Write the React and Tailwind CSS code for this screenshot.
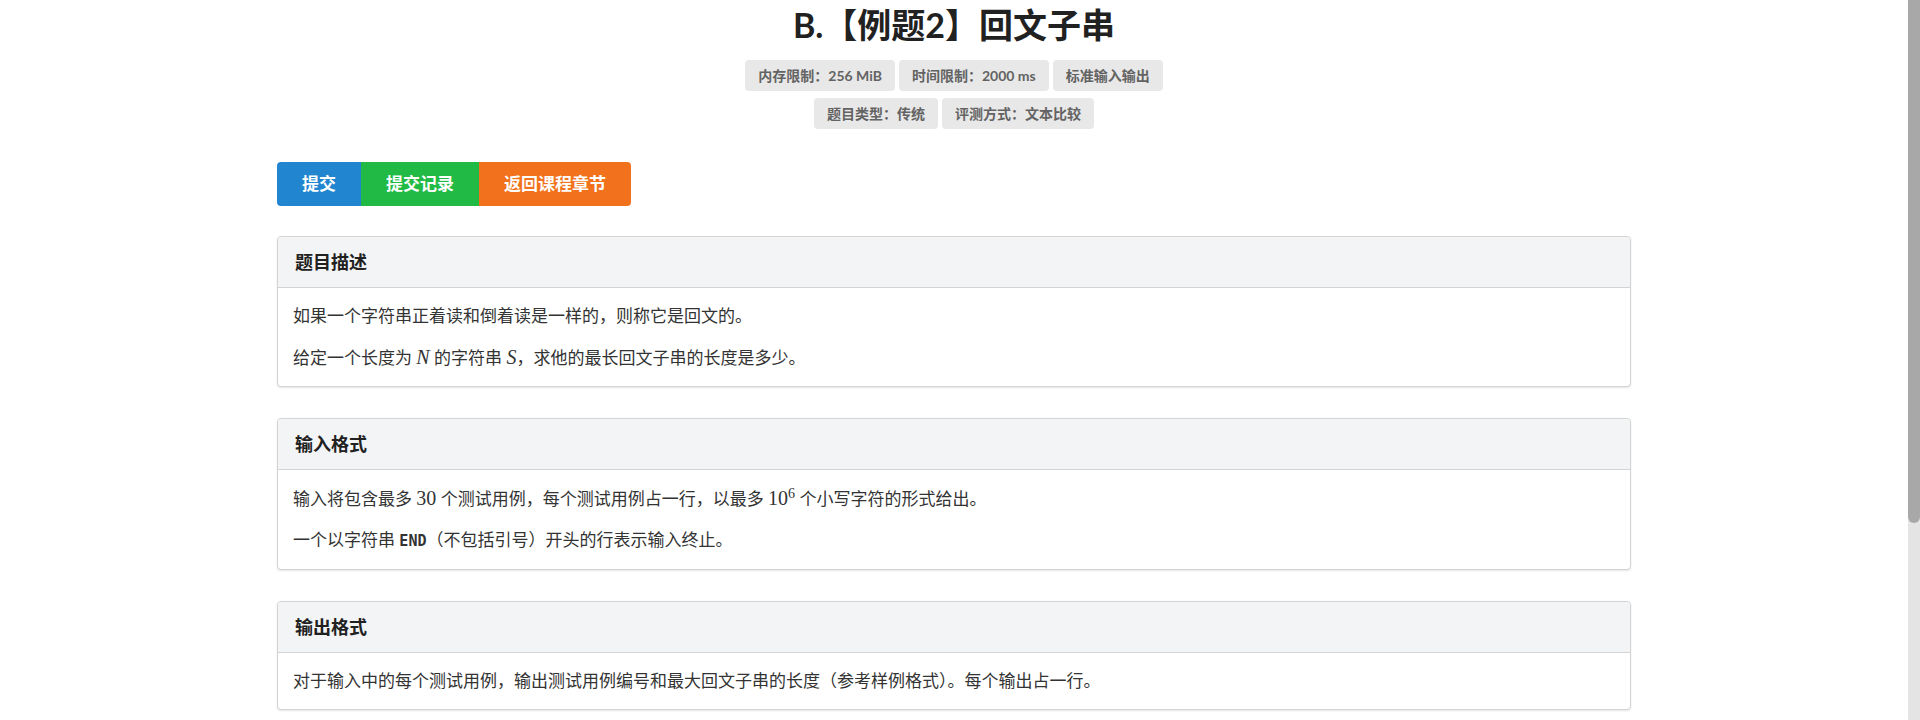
const tags = [['内存限制：256 MiB', '时间限制：2000 ms', '标准输入输出'], ['题目类型：传统', '评测方式：文本比较']]

function MathVar({ children }) {
  return (
    <span className="font-['Liberation_Serif',serif] text-[20px] italic">{children}</span>
  )
}

function MathNum({ children }) {
  return <span className="font-['Liberation_Serif',serif] text-[20px]">{children}</span>
}

function Section({ title, children }) {
  return (
    <section className="rounded-[4px] border border-[#d4d4d5] bg-white shadow-[0_1px_2px_rgba(34,36,38,0.12)]">
      <div className="flex h-[51px] items-center rounded-t-[4px] border-b border-[#d4d4d5] bg-[#f3f4f5] px-[17px] text-[18px] font-bold text-[#212121]">
        {title}
      </div>
      <div className="flex flex-col gap-[17px] px-[15px] py-[16px] text-[17px] leading-[24px] text-[#333]">
        {children}
      </div>
    </section>
  )
}

function App() {
  return (
    <div className="flex h-[720px] overflow-hidden bg-white font-['Lato','Noto_Sans_CJK_SC',sans-serif]">
      <main className="flex-1">
        <div className="mx-auto w-[1354px]">
          <h1 className="mt-[3px] h-[44px] text-center text-[34px] font-bold leading-[44px] text-[#212121]">
            B.【例题2】回文子串
          </h1>

          <div className="mt-[13px] flex flex-col items-center gap-[7px]">
            {tags.map((row, i) => (
              <div key={i} className="flex gap-[4px]">
                {row.map((tag) => (
                  <span
                    key={tag}
                    className="rounded-[4px] bg-[#e8e8e8] px-[13px] py-[8px] text-[14px] font-bold leading-[15px] text-[#636363]"
                  >
                    {tag}
                  </span>
                ))}
              </div>
            ))}
          </div>

          <div className="mt-[33px] flex">
            <button
              type="button"
              className="h-[44px] rounded-l-[4px] bg-[#2185d0] px-[25px] text-[17px] font-bold text-white"
            >
              提交
            </button>
            <button
              type="button"
              className="h-[44px] bg-[#21ba45] px-[25px] text-[17px] font-bold text-white"
            >
              提交记录
            </button>
            <button
              type="button"
              className="h-[44px] rounded-r-[4px] bg-[#f2711c] px-[25px] text-[17px] font-bold text-white"
            >
              返回课程章节
            </button>
          </div>

          <div className="mt-[30px] flex flex-col gap-[31px]">
            <Section title="题目描述">
              <p>如果一个字符串正着读和倒着读是一样的，则称它是回文的。</p>
              <p>
                给定一个长度为 <MathVar>N</MathVar> 的字符串 <MathVar>S</MathVar>，求他的最长回文子串的长度是多少。
              </p>
            </Section>

            <Section title="输入格式">
              <p>
                输入将包含最多 <MathNum>30</MathNum> 个测试用例，每个测试用例占一行，以最多{' '}
                <MathNum>
                  10<sup className="text-[14px]">6</sup>
                </MathNum>{' '}
                个小写字符的形式给出。
              </p>
              <p>
                一个以字符串 <code className="font-['DejaVu_Sans_Mono',monospace] text-[15px] font-bold">END</code>（不包括引号）开头的行表示输入终止。
              </p>
            </Section>

            <Section title="输出格式">
              <p>对于输入中的每个测试用例，输出测试用例编号和最大回文子串的长度（参考样例格式）。每个输出占一行。</p>
            </Section>
          </div>
        </div>
      </main>

      <div className="w-[12px] bg-[#e4e4e4]">
        <div className="h-[523px] rounded-b-full bg-[#a8a8a8]" />
      </div>
    </div>
  )
}

export default App
